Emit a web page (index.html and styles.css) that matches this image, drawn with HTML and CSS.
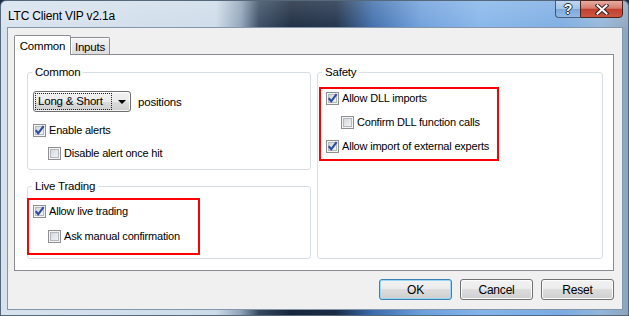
FILE: index.html
```html
<!DOCTYPE html>
<html>
<head>
<meta charset="utf-8">
<title>LTC Client VIP v2.1a</title>
<link rel="stylesheet" href="styles.css">
</head>
<body>
<div class="window">
  <div class="titlebar">
    <span class="title">LTC Client VIP v2.1a</span>
    <div class="caption-buttons">
      <div class="cap-btn help">?</div>
      <div class="cap-btn close">
        <svg class="close-x" viewBox="0 0 14 11" width="14" height="11">
          <path d="M2.5 1.5 L11.5 9.5 M11.5 1.5 L2.5 9.5" stroke="#3a2320" stroke-width="4" stroke-linecap="square"/>
          <path d="M2.5 1.5 L11.5 9.5 M11.5 1.5 L2.5 9.5" stroke="#ffffff" stroke-width="2" stroke-linecap="square"/>
        </svg>
      </div>
    </div>
  </div>
  <div class="client">
    <div class="tabs">
      <div class="tab active">Common</div>
      <div class="tab inactive">Inputs</div>
    </div>
    <div class="panel">
      <div class="group g-common">
        <span class="legend">Common</span>
        <div class="combo-row">
          <div class="combo">
            <span class="combo-text">Long &amp; Short</span>
            <span class="combo-arrow"></span>
          </div>
          <span class="combo-label">positions</span>
        </div>
        <div class="check-list common-list">
          <div class="check"><span class="cb"><svg viewBox="0 0 11 11" width="11" height="11"><path d="M1.8 5.2 L4.2 8.3 L9.6 1.2" fill="none" stroke="#2b4aa0" stroke-width="2.1"/></svg></span>Enable alerts</div>
          <div class="check sub"><span class="cb"></span>Disable alert once hit</div>
        </div>
      </div>
      <div class="group g-live">
        <span class="legend">Live Trading</span>
        <div class="hl hl-live">
          <div class="check"><span class="cb"><svg viewBox="0 0 11 11" width="11" height="11"><path d="M1.8 5.2 L4.2 8.3 L9.6 1.2" fill="none" stroke="#2b4aa0" stroke-width="2.1"/></svg></span>Allow live trading</div>
          <div class="check sub"><span class="cb"></span>Ask manual confirmation</div>
        </div>
      </div>
      <div class="group g-safety">
        <span class="legend">Safety</span>
        <div class="hl hl-safety">
          <div class="check"><span class="cb"><svg viewBox="0 0 11 11" width="11" height="11"><path d="M1.8 5.2 L4.2 8.3 L9.6 1.2" fill="none" stroke="#2b4aa0" stroke-width="2.1"/></svg></span>Allow DLL imports</div>
          <div class="check sub"><span class="cb"></span>Confirm DLL function calls</div>
          <div class="check"><span class="cb"><svg viewBox="0 0 11 11" width="11" height="11"><path d="M1.8 5.2 L4.2 8.3 L9.6 1.2" fill="none" stroke="#2b4aa0" stroke-width="2.1"/></svg></span>Allow import of external experts</div>
        </div>
      </div>
    </div>
    <div class="buttons">
      <button class="btn default">OK</button>
      <button class="btn">Cancel</button>
      <button class="btn">Reset</button>
    </div>
  </div>
</div>
</body>
</html>
```
FILE: styles.css
```css
* { box-sizing: border-box; }
html, body { margin: 0; padding: 0; }
body {
  width: 629px;
  height: 316px;
  overflow: hidden;
  font-family: "Liberation Sans", Arial, sans-serif;
  font-size: 11px;
  letter-spacing: -0.2px;
  color: #000;
  background: #1d2f48;
}
.window {
  width: 629px;
  height: 316px;
  display: flex;
  flex-direction: column;
  padding: 0 5px 5px 6px;
  border: 1px solid #56687c;
  border-radius: 6px 6px 0 0;
  background:
    linear-gradient(180deg, rgba(255,255,255,0.18) 0, rgba(255,255,255,0.05) 26px, rgba(255,255,255,0) 27px),
    linear-gradient(90deg, #d6e2ee 0, #cddbe9 215px, #8ea2b8 240px, #34485f 258px, #17263b 290px, #1a2c45 335px, #3c6cab 372px, #6c9edb 420px, #84b4ea 480px, #7aabe2 560px, #93b6da 600px, #8da3bb 629px);
}
.titlebar {
  height: 26px;
  flex: none;
  display: flex;
  justify-content: space-between;
  align-items: flex-start;
}
.title {
  margin-top: 8px;
  padding-left: 1px;
  font-size: 12px;
  line-height: 14px;
  letter-spacing: -0.2px;
  text-shadow: 0 0 6px rgba(255,255,255,0.9);
}
.caption-buttons {
  display: flex;
  margin-top: -1px;
}
.cap-btn {
  height: 18px;
  display: flex;
  align-items: center;
  justify-content: center;
}
.help {
  width: 25px;
  border: 1px solid rgba(35,55,85,0.75);
  border-right: none;
  border-radius: 0 0 0 4px;
  background: linear-gradient(180deg, #c2d7ee 0, #a4c3e6 48%, #7fa8d8 52%, #92bae6 100%);
  color: #fff;
  font-family: "Liberation Sans", sans-serif;
  font-weight: bold;
  font-size: 14px;
  letter-spacing: 0;
  text-shadow: 0 0 1px #1e3550, 1px 0 0 #1e3550, -1px 0 0 #1e3550, 0 1px 0 #1e3550, 0 -1px 0 #1e3550;
}
.close {
  width: 43px;
  border: 1px solid #4a231d;
  border-radius: 0 0 4px 0;
  background: linear-gradient(180deg, #e6aca2 0, #d77e70 45%, #c1402d 52%, #cc5642 100%);
}
.close-x { display: block; }

.client {
  flex: 1;
  display: flex;
  flex-direction: column;
  border: 1px solid #8396ab;
  background: #f0f0f0;
  padding: 7px 8px 9px 6px;
}
.tabs {
  height: 19px;
  flex: none;
  display: flex;
  align-items: flex-end;
  position: relative;
  z-index: 2;
}
.tab {
  border: 1px solid #898c95;
  border-bottom: none;
  text-align: center;
  line-height: 14px;
  font-size: 11.5px;
}
.tab.active {
  width: 57px;
  height: 20px;
  margin-bottom: -1px;
  padding-top: 3px;
  background: #fff;
  border-radius: 2px 2px 0 0;
}
.tab.inactive {
  width: 40px;
  height: 17px;
  margin-left: -1px;
  padding-top: 2px;
  background: linear-gradient(180deg, #f4f4f4 0, #e6e6e6 60%, #dcdcdc 100%);
  box-shadow: inset 1px 1px 0 #fbfbfb;
  border-radius: 0 2px 0 0;
}
.panel {
  height: 217px;
  flex: none;
  background: #fff;
  border: 1px solid #898c95;
  padding: 17px 10px 11px 12px;
  display: grid;
  grid-template-columns: 284px 286px;
  grid-template-rows: 98px 73px;
  column-gap: 6px;
  row-gap: 16px;
}
.group {
  position: relative;
  border: 1px solid #d5dfe5;
  border-radius: 3px;
  padding: 0 5px;
}
.g-safety {
  grid-column: 2;
  grid-row: 1 / 3;
}
.legend {
  position: absolute;
  top: -8px;
  left: 4px;
  padding: 0 3px;
  line-height: 14px;
  font-size: 11.5px;
  background: #fff;
}
.combo-row {
  display: flex;
  align-items: center;
  margin-top: 18px;
}
.combo {
  width: 98px;
  height: 21px;
  display: flex;
  align-items: center;
  padding: 0 1px;
  border: 1px solid #707070;
  border-radius: 3px;
  background: linear-gradient(180deg, #f2f2f2 0, #ebebeb 50%, #dddddd 50%, #cfcfcf 100%);
  box-shadow: inset 0 0 0 1px rgba(255,255,255,0.75);
}
.combo-text {
  width: 77px;
  height: 17px;
  line-height: 15px;
  padding-left: 2px;
  font-size: 11.5px;
  border: 1px dotted #222;
}
.combo-arrow {
  margin-left: auto;
  margin-right: 3px;
  width: 0;
  height: 0;
  border-left: 4px solid transparent;
  border-right: 4px solid transparent;
  border-top: 4px solid #000;
}
.combo-label {
  margin-left: 7px;
  font-size: 11.5px;
}
.check-list {
  display: flex;
  flex-direction: column;
}
.common-list {
  margin-top: 9px;
  gap: 5px;
}
.check {
  height: 18px;
  display: flex;
  align-items: center;
  line-height: 14px;
  white-space: nowrap;
}
.check.sub {
  padding-left: 15px;
}
.cb {
  flex: none;
  width: 13px;
  height: 13px;
  margin-right: 3px;
  border: 1px solid #8f8f8f;
  background: linear-gradient(135deg, #c9ced4 0, #e4e7ea 50%, #f7f7f7 100%);
  box-shadow: inset 0 0 0 1px #f4f4f4, inset 0 0 0 2px #b3b8bf;
  display: flex;
  align-items: center;
  justify-content: center;
}
.cb svg { display: block; }
.hl {
  border: 2px solid #ff0000;
  display: flex;
  flex-direction: column;
}
.hl-live {
  width: 173px;
  height: 57px;
  margin-top: 11px;
  margin-left: -6px;
  padding: 2px 0 0 4px;
  gap: 7px;
}
.hl-safety {
  width: 180px;
  height: 74px;
  margin-top: 14px;
  margin-left: -4px;
  padding: 0 0 0 5px;
  gap: 6px;
}
.buttons {
  display: flex;
  justify-content: flex-end;
  gap: 8px;
  margin-top: 8px;
}
.btn {
  width: 73px;
  height: 21px;
  padding: 0;
  font: inherit;
  font-size: 12px;
  letter-spacing: -0.2px;
  color: #000;
  border: 1px solid #707070;
  border-radius: 3px;
  background: linear-gradient(180deg, #f2f2f2 0, #ebebeb 50%, #dddddd 50%, #cfcfcf 100%);
  box-shadow: inset 0 0 0 1px #fcfcfc;
  display: flex;
  align-items: center;
  justify-content: center;
}
.btn.default {
  border-color: #3c7fb1;
  box-shadow: inset 0 0 0 1px #9bd8f3;
}
```
